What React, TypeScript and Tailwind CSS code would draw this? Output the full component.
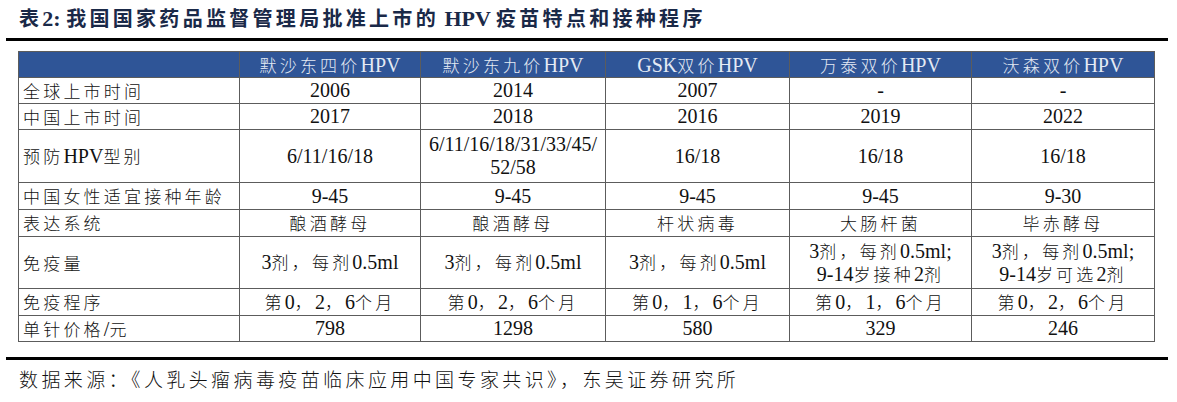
import React from 'react';

const serif = "font-['Liberation_Serif','Times_New_Roman',serif]";
const cjkFont = "font-['Noto_Sans_CJK_SC',sans-serif]";

// split a string into CJK and latin runs so each gets its own font
function Mixed({ text, cjk, latin }: { text: string; cjk: string; latin: string }) {
  return (
    <>
      {text
        .split(/([^\x00-\x7f]+)/)
        .filter(Boolean)
        .map((part, i) =>
          /[^\x00-\x7f]/.test(part) ? (
            <span key={i} className={cjk}>
              {part}
            </span>
          ) : (
            <span key={i} className={latin}>
              {part}
            </span>
          )
        )}
    </>
  );
}

const bodyCjk = `${cjkFont} text-[17px] font-light tracking-[3.2px]`;
const bodyLatin = `${serif} text-[20px]`;

interface Row {
  label: string;
  values: string[][];
  h: string;
}

const headers = ['默沙东四价HPV', '默沙东九价HPV', 'GSK双价HPV', '万泰双价HPV', '沃森双价HPV'];

const rows: Row[] = [
  { label: '全球上市时间', values: [['2006'], ['2014'], ['2007'], ['-'], ['-']], h: 'h-[25px]' },
  { label: '中国上市时间', values: [['2017'], ['2018'], ['2016'], ['2019'], ['2022']], h: 'h-[25px]' },
  {
    label: '预防HPV型别',
    values: [['6/11/16/18'], ['6/11/16/18/31/33/45/', '52/58'], ['16/18'], ['16/18'], ['16/18']],
    h: 'h-[52px]'
  },
  { label: '中国女性适宜接种年龄', values: [['9-45'], ['9-45'], ['9-45'], ['9-45'], ['9-30']], h: 'h-[26px]' },
  { label: '表达系统', values: [['酿酒酵母'], ['酿酒酵母'], ['杆状病毒'], ['大肠杆菌'], ['毕赤酵母']], h: 'h-[26px]' },
  {
    label: '免疫量',
    values: [
      ['3剂，每剂0.5ml'],
      ['3剂，每剂0.5ml'],
      ['3剂，每剂0.5ml'],
      ['3剂，每剂0.5ml;', '9-14岁接种2剂'],
      ['3剂，每剂0.5ml;', '9-14岁可选2剂']
    ],
    h: 'h-[51px]'
  },
  {
    label: '免疫程序',
    values: [['第0，2，6个月'], ['第0，2，6个月'], ['第0，1，6个月'], ['第0，1，6个月'], ['第0，2，6个月']],
    h: 'h-[26px]'
  },
  { label: '单针价格/元', values: [['798'], ['1298'], ['580'], ['329'], ['246']], h: 'h-[25px]' }
];

export default function App() {
  return (
    <div className="w-[1177px] h-[402px] bg-white flex flex-col text-[#111]">
      {/* Title */}
      <div className="h-[38px] pl-[19px] pt-[4px] leading-[28px] text-[#1a2948] font-bold whitespace-nowrap">
        <Mixed
          text="表2: 我国国家药品监督管理局批准上市的 HPV 疫苗特点和接种程序"
          cjk={`${cjkFont} text-[20px] font-bold tracking-[3.3px]`}
          latin={`${serif} text-[22px] font-bold`}
        />
      </div>
      <div className="ml-[6px] w-[1162px] h-[3px] bg-black" />

      {/* Table */}
      <div className="ml-[18px] mt-[10px] w-[1137px] grid grid-cols-[220px_180px_184px_183px_181px_182px] gap-px p-px bg-[#5c5c5c]">
        <div className="h-[25px] bg-[#2f5597]" />
        {headers.map((h) => (
          <div key={h} className="h-[25px] bg-[#2f5597] flex items-center justify-center text-[#e4eaf4] leading-[24px] whitespace-nowrap">
            <Mixed text={h} cjk={bodyCjk} latin={bodyLatin} />
          </div>
        ))}
        {rows.map((row) => (
          <React.Fragment key={row.label}>
            <div className={`${row.h} bg-white flex items-center pl-[4px] leading-[24px] whitespace-nowrap`}>
              <Mixed text={row.label} cjk={bodyCjk} latin={bodyLatin} />
            </div>
            {row.values.map((lines, i) => (
              <div
                key={i}
                className={`${row.h} bg-white flex flex-col items-center justify-center leading-[22px] whitespace-nowrap`}
              >
                {lines.map((line, j) => (
                  <div key={j}>
                    <Mixed text={line} cjk={bodyCjk} latin={bodyLatin} />
                  </div>
                ))}
              </div>
            ))}
          </React.Fragment>
        ))}
      </div>

      <div className="ml-[6px] mt-[15px] w-[1162px] h-[3px] bg-black" />

      {/* Source */}
      <div className="pl-[19px] mt-[4px] leading-[30px] whitespace-nowrap">
        <Mixed
          text="数据来源：《人乳头瘤病毒疫苗临床应用中国专家共识》，东吴证券研究所"
          cjk={`${cjkFont} text-[19px] font-light tracking-[3.4px]`}
          latin={`${serif} text-[20px]`}
        />
      </div>
    </div>
  );
}
